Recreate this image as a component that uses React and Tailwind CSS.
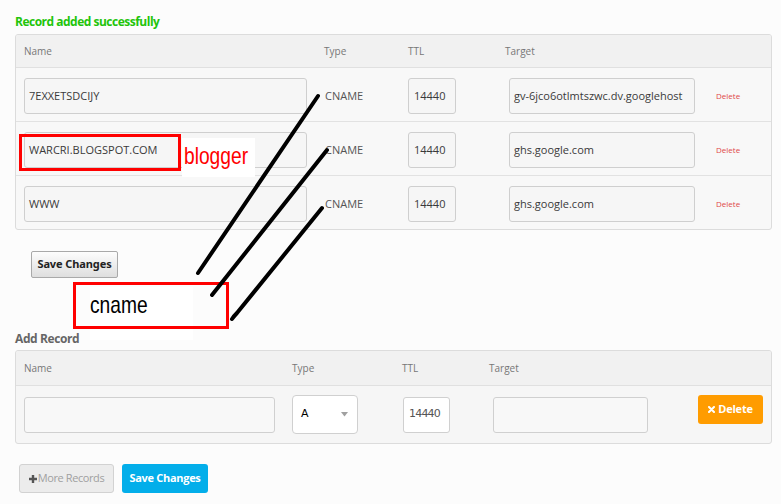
import React from 'react';

const records = [
    { name: '7EXXETSDCIJY', type: 'CNAME', ttl: '14440', target: 'gv-6jco6otlmtszwc.dv.googlehost' },
    { name: 'WARCRI.BLOGSPOT.COM', type: 'CNAME', ttl: '14440', target: 'ghs.google.com' },
    { name: 'WWW', type: 'CNAME', ttl: '14440', target: 'ghs.google.com' },
];

const fieldCls = 'h-[36px] border border-[#cfcfcf] rounded-[3px] bg-[#f6f6f6] px-[4px] flex items-center overflow-hidden whitespace-nowrap text-[11px] text-[#3a3a3a]';

const App = () => {
    return (
        <div className="relative w-[781px] h-[504px] overflow-hidden bg-[#fcfcfc] font-['Open_Sans',sans-serif]">
            <div className="pt-[13px] pl-[15px]">
                {/* Existing records */}
                <div className="h-[17px] text-[12px] leading-[17px] font-bold text-[#22c40a] tracking-[-0.5px]">Record added successfully</div>
                <div className="mt-[4px] w-[757px] border border-[#dcdcdc] rounded-[3px] bg-[#f8f8f8] overflow-hidden">
                    <div className="h-[33px] flex items-center pl-[8px] bg-[#f1f1f1] border-b border-[#e0e0e0] text-[10px] text-[#777]">
                        <div className="w-[300px]">Name</div>
                        <div className="w-[84px]">Type</div>
                        <div className="w-[97px]">TTL</div>
                        <div>Target</div>
                    </div>
                    {records.map((r, i) => (
                        <div key={i} className={'flex items-center pl-[8px] ' + (i < 2 ? 'h-[54px] border-b border-[#e2e2e2]' : 'h-[53px]')}>
                            <div className="w-[300px] pt-[3px]">
                                <div className={fieldCls + ' w-[283px]'}>{r.name}</div>
                            </div>
                            <div className="w-[84px] pl-[1px] pt-[3px] text-[11px] text-[#555]">{r.type}</div>
                            <div className="w-[101px] pt-[3px]">
                                <div className={fieldCls + ' w-[48px] px-[5px]'}>{r.ttl}</div>
                            </div>
                            <div className="pt-[3px]">
                                <div className={fieldCls + ' w-[186px]'}>{r.target}</div>
                            </div>
                            <div className="ml-[21px] pt-[3px] text-[8px] text-[#e04848]">Delete</div>
                        </div>
                    ))}
                </div>

                <button className="mt-[21px] ml-[16px] h-[27px] w-[87px] border border-[#a9a9a9] rounded-[2px] bg-gradient-to-b from-[#fdfdfd] to-[#dedede] text-[11px] font-bold text-[#222] font-['Noto_Sans',sans-serif] tracking-[-0.1px]">
                    Save Changes
                </button>

                {/* Add record */}
                <div className="mt-[53px] h-[16px] text-[12px] leading-[16px] font-bold text-[#666] tracking-[-0.4px]">Add Record</div>
                <div className="mt-[3px] w-[757px] border border-[#dcdcdc] rounded-[3px] bg-[#f6f6f6] overflow-hidden">
                    <div className="h-[35px] flex items-center pl-[8px] bg-[#f1f1f1] border-b border-[#e0e0e0] text-[10px] text-[#777]">
                        <div className="w-[268px]">Name</div>
                        <div className="w-[110px]">Type</div>
                        <div className="w-[87px]">TTL</div>
                        <div>Target</div>
                    </div>
                    <div className="h-[57px] flex items-center pl-[8px]">
                        <div className="w-[268px]">
                            <div className="h-[36px] w-[251px] border border-[#d0d0d0] rounded-[3px] bg-[#f8f8f8]" />
                        </div>
                        <div className="w-[111px]">
                            <div className="h-[39px] w-[66px] border border-[#d0d0d0] rounded-[4px] bg-white flex items-center justify-between pl-[8px] pr-[9px] text-[11px] text-black font-['DejaVu_Sans',sans-serif]">
                                <span>A</span>
                                <svg width="7" height="5" viewBox="0 0 7 5"><path d="M0 0h7L3.5 4.5z" fill="#a0a0a0" /></svg>
                            </div>
                        </div>
                        <div className="w-[90px]">
                            <div className="h-[36px] w-[47px] border border-[#d0d0d0] rounded-[3px] bg-white flex items-center justify-end pr-[9px] text-[11px] text-[#555] font-['DejaVu_Sans',sans-serif] tracking-[-0.8px]">14440</div>
                        </div>
                        <div className="h-[36px] w-[155px] border border-[#d0d0d0] rounded-[3px] bg-[#f8f8f8]" />
                        <button className="self-start mt-[9px] ml-[50px] h-[29px] w-[65px] rounded-[3px] bg-[#ff9c00] text-white text-[11px] font-bold flex items-center justify-center gap-[3px] tracking-[-0.2px]">
                            <svg width="7" height="7" viewBox="0 0 7 7"><path d="M1 1l5 5M6 1L1 6" stroke="white" strokeWidth="2" strokeLinecap="round" /></svg>
                            Delete
                        </button>
                    </div>
                </div>

                <div className="mt-[20px] ml-[4px] flex gap-[8px]">
                    <button className="h-[29px] w-[95px] border border-[#d2d2d2] rounded-[3px] bg-[#ececec] text-[11px] text-[#a0a0a0] flex items-center justify-center tracking-[-0.4px]">
                        <svg width="8" height="8" viewBox="0 0 8 8" className="mr-[1px]"><path d="M4 0v8M0 4h8" stroke="#555" strokeWidth="2.4" /></svg>
                        More Records
                    </button>
                    <button className="h-[29px] w-[86px] rounded-[3px] bg-[#03aeea] text-white text-[11px] font-bold tracking-[-0.3px]">
                        Save Changes
                    </button>
                </div>
            </div>

            {/* Annotations drawn over the screenshot */}
            <div className="absolute left-[19px] top-[134px] w-[162px] h-[37px] border-[3px] border-[#ff0000]" />
            <div className="absolute left-[182px] top-[138px] w-[73px] h-[39px] bg-white flex items-center pl-[2px]">
                <span className="inline-block origin-left scale-x-[0.8] text-[24px] leading-none text-[#ff0000] font-['Liberation_Sans',sans-serif] -mt-[4px]">blogger</span>
            </div>
            <div className="absolute left-[90px] top-[287px] w-[103px] h-[53px] bg-white" />
            <div className="absolute left-[73px] top-[282px] w-[156px] h-[47px] border-[3px] border-[#ff0000] flex items-center pl-[14px]">
                <span className="inline-block origin-left scale-x-[0.8] text-[24px] leading-none text-black font-['Liberation_Sans',sans-serif] -mt-[2px]">cname</span>
            </div>
            <svg className="absolute left-0 top-0" width="781" height="504">
                <g stroke="black" strokeWidth="4" strokeLinecap="round" fill="none">
                    <path d="M198 273L318 96" />
                    <path d="M212 295L327 150" />
                    <path d="M232 319Q234 316 237 313L322 208" />
                </g>
            </svg>
        </div>
    );
};

export default App;
